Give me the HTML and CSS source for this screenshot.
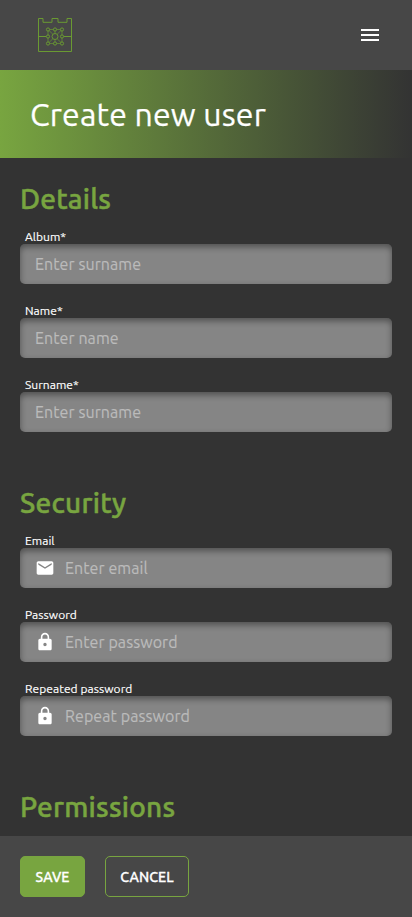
FILE: index.html
```html
<!DOCTYPE html>
<html lang="en">
<head>
<meta charset="utf-8">
<meta name="viewport" content="width=device-width, initial-scale=1">
<title>Create new user</title>
<link rel="stylesheet" href="styles.css">
</head>
<body>
<div class="app">
  <header class="topbar">
    <svg class="logo" width="34" height="35" viewBox="0 0 34 35" fill="none" stroke="#6a9a32" stroke-width="1">
      <path d="M.5.5H5V4.300H14V.5H20V4.300H29V.5H33.500V33.500H.5ZM.5 18.500H8.500M25.500 18.500H33.500"/>
      <path stroke-width=".8" opacity=".85" d="M10 11.500H24V25.500H10ZM17 11.500V15.500M17 21.500V25.500M10 11.500L14.800 16.200M24 11.500L19.200 16.200M10 25.500L14.800 20.800M24 25.500L19.200 20.800"/>
      <g fill="#474747">
        <circle cx="17" cy="18.500" r="3"/>
        <circle cx="10" cy="11.500" r="1.600"/><circle cx="17" cy="11.500" r="1.600"/><circle cx="24" cy="11.500" r="1.600"/>
        <circle cx="10" cy="18.500" r="1.600"/><circle cx="24" cy="18.500" r="1.600"/>
        <circle cx="10" cy="25.500" r="1.600"/><circle cx="17" cy="25.500" r="1.600"/><circle cx="24" cy="25.500" r="1.600"/>
      </g>
    </svg>
    <svg class="menu" width="24" height="24" viewBox="0 0 24 24" fill="#fff"><path d="M3 18h18v-2H3v2zm0-5h18v-2H3v2zm0-7v2h18V6H3z"/></svg>
  </header>
  <div class="banner"><h1>Create new user</h1></div>
  <main class="form">
    <section>
      <h2>Details</h2>
      <div class="field"><label for="album">Album*</label><div class="control"><input id="album" placeholder="Enter surname"></div></div>
      <div class="field"><label for="name">Name*</label><div class="control"><input id="name" placeholder="Enter name"></div></div>
      <div class="field"><label for="surname">Surname*</label><div class="control"><input id="surname" placeholder="Enter surname"></div></div>
    </section>
    <section>
      <h2>Security</h2>
      <div class="field"><label for="email">Email</label><div class="control">
        <svg width="20" height="20" viewBox="0 0 24 24" fill="#fff"><path d="M20 4H4c-1.100 0-1.990.9-1.990 2L2 18c0 1.100.9 2 2 2h16c1.100 0 2-.9 2-2V6c0-1.100-.9-2-2-2zm0 4l-8 5-8-5V6l8 5 8-5v2z"/></svg>
        <input id="email" placeholder="Enter email"></div></div>
      <div class="field"><label for="password">Password</label><div class="control">
        <svg width="20" height="20" viewBox="0 0 24 24" fill="#fff"><path d="M18 8h-1V6c0-2.760-2.240-5-5-5S7 3.240 7 6v2H6c-1.100 0-2 .9-2 2v10c0 1.100.9 2 2 2h12c1.100 0 2-.9 2-2V10c0-1.100-.9-2-2-2zm-6 9c-1.100 0-2-.9-2-2s.9-2 2-2 2 .9 2 2-.9 2-2 2zm3.100-9H8.900V6c0-1.710 1.390-3.100 3.100-3.100 1.710 0 3.100 1.390 3.100 3.100v2z"/></svg>
        <input id="password" type="password" placeholder="Enter password"></div></div>
      <div class="field"><label for="repeat">Repeated password</label><div class="control">
        <svg width="20" height="20" viewBox="0 0 24 24" fill="#fff"><path d="M18 8h-1V6c0-2.760-2.240-5-5-5S7 3.240 7 6v2H6c-1.100 0-2 .9-2 2v10c0 1.100.9 2 2 2h12c1.100 0 2-.9 2-2V10c0-1.100-.9-2-2-2zm-6 9c-1.100 0-2-.9-2-2s.9-2 2-2 2 .9 2 2-.9 2-2 2zm3.100-9H8.900V6c0-1.710 1.390-3.100 3.100-3.100 1.710 0 3.100 1.390 3.100 3.100v2z"/></svg>
        <input id="repeat" type="password" placeholder="Repeat password"></div></div>
    </section>
    <section><h2>Permissions</h2></section>
  </main>
  <footer class="actions">
    <button class="btn save" type="button">SAVE</button>
    <button class="btn cancel" type="button">CANCEL</button>
  </footer>
</div>
</body>
</html>
```
FILE: styles.css
```css
* { box-sizing: border-box; }
body { margin: 0; background: #333; color: #fff; font-family: Ubuntu, "Noto Sans", sans-serif; }
.app { height: 917px; display: flex; flex-direction: column; overflow: hidden; }
.topbar { flex: none; height: 70px; padding: 0 30px 0 38px; background: #474747; display: flex; align-items: center; justify-content: space-between; }
.banner { flex: none; height: 88px; padding: 0 30px; display: flex; align-items: center; background: linear-gradient(90deg, #78a540, #333); }
h1 { margin: 0; font-size: 32px; line-height: 40px; font-weight: 400; letter-spacing: .17px; -webkit-text-stroke: .25px #fff; white-space: nowrap; }
.form { flex: 1; min-height: 0; overflow: hidden; padding: 22px 20px 0; }
section { height: 304px; }
h2 { margin: 0 0 10px; height: 38px; line-height: 38px; font-size: 28px; font-weight: 500; letter-spacing: .25px; -webkit-text-stroke: .5px #78a540; color: #78a540; white-space: nowrap; }
.field { height: 74px; display: flex; flex-direction: column; }
label { height: 16px; line-height: 17px; padding-left: 5px; font-size: 12px; letter-spacing: .05px; -webkit-text-stroke: .15px #fff; white-space: nowrap; }
.control { height: 40px; padding: 0 15px; display: flex; align-items: center; gap: 10px; border-radius: 5px; background: #858585; box-shadow: inset 0 3px 6px rgba(0, 0, 0, .4); }
.control svg { flex: none; }
input { flex: 1; min-width: 0; height: 40px; padding: 0; border: 0; outline: 0; background: none; font: 400 16px Ubuntu, "Noto Sans", sans-serif; letter-spacing: .08px; color: #fff; }
input::placeholder { color: #bbb; opacity: 1; -webkit-text-stroke: .15px #bbb; }
.actions { flex: none; height: 81px; padding: 20px; display: flex; gap: 20px; background: #474747; }
.btn { height: 41px; padding: 0; border: 1px solid #78a540; border-radius: 5px; color: #fff; font: 500 14px Ubuntu, "Noto Sans", sans-serif; letter-spacing: .1px; -webkit-text-stroke: .3px #fff; }
.save { width: 65px; background: #78a540; }
.cancel { width: 84px; background: transparent; }
```
